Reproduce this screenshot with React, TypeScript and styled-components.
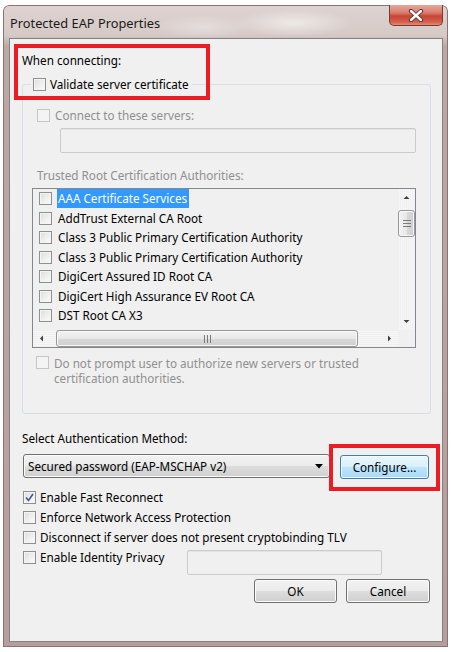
import React from 'react';
import styled, { createGlobalStyle } from 'styled-components';

const FONT = `"Noto Sans", "Liberation Sans", sans-serif`;

const Global = createGlobalStyle`
  html, body { margin: 0; padding: 0; background: #ffffff; }
  body { font-family: ${FONT}; font-size: 11.7px; color: #000; }
  * { box-sizing: border-box; }
`;

const Window = styled.div`
  margin: 5px 0 0 3px;
  width: 445px;
  height: 642px;
  display: flex;
  flex-direction: column;
  padding: 0 5px 5px 6px;
  border-radius: 6px 6px 0 0;
  background:
    radial-gradient(ellipse 60px 14px at 290px 18px, rgba(255,255,255,0.55), rgba(255,255,255,0) 100%),
    radial-gradient(ellipse 50px 12px at 200px 22px, rgba(255,255,255,0.35), rgba(255,255,255,0) 100%),
    linear-gradient(to bottom, #ddd3d0 0px, #d6cac7 30px, #bca7a2 42px, #b69f9a 100%);
  box-shadow: inset 0 0 0 1px #8a7370;
`;

const TitleBar = styled.div`
  height: 33px;
  display: flex;
  justify-content: space-between;
  align-items: flex-start;
`;

const Title = styled.div`
  padding: 9px 0 0 1px;
  font-size: 12.8px;
  color: #1a1a1a;
`;

const CloseBtn = styled.div`
  width: 54px;
  height: 21px;
  border: 1px solid #7a3a34;
  border-top: none;
  border-radius: 0 0 5px 5px;
  background: linear-gradient(to bottom, #e8a89c 0%, #d97a6a 40%, #c84534 55%, #d4604c 85%, #e08a74 100%);
  display: flex;
  align-items: center;
  justify-content: center;
`;

const Client = styled.div`
  flex: 1;
  position: relative;
  background: #f0f0f0;
  border: 1px solid #838383;
  display: flex;
  flex-direction: column;
`;

const Text = styled.div<{ $disabled?: boolean }>`
  line-height: 15px;
  color: ${p => (p.$disabled ? '#8f8f8f' : '#000')};
  white-space: nowrap;
`;

const Heading = styled(Text)`
  margin: 14px 0 0 12px;
`;

const Group = styled.fieldset`
  margin: 9px 0 0 12px;
  width: 409px;
  padding: 0 14px 27px 9px;
  border: 1px solid #d5dfe5;
  border-radius: 3px;
  min-inline-size: auto;
`;

const Legend = styled.legend`
  padding: 0 3px 0 2px;
  margin-left: -1px;
  height: 15px;
  display: flex;
  align-items: center;
  gap: 4px;
  line-height: 15px;
  white-space: nowrap;
`;

const Box = styled.span<{ $disabled?: boolean }>`
  flex: none;
  width: 13px;
  height: 13px;
  border: 1px solid ${p => (p.$disabled ? '#c6c6c6' : '#8e8f8f')};
  background: ${p =>
    p.$disabled
      ? '#f4f4f4'
      : 'linear-gradient(135deg, #dcdcdc 0%, #eeeeee 50%, #fbfbfb 100%)'};
  box-shadow: inset 0 0 0 1px #f4f4f4;
  display: flex;
  align-items: center;
  justify-content: center;
`;

const Check = ({ checked, disabled }: { checked?: boolean; disabled?: boolean }) => (
  <Box $disabled={disabled}>
    {checked && (
      <svg width="9" height="9" viewBox="0 0 9 9">
        <path d="M1 4.5 L3.5 7.5 L8 1" fill="none" stroke="#3b5a9a" strokeWidth="1.6" />
      </svg>
    )}
  </Box>
);

const CheckRow = styled.div<{ $indent?: number; $top?: number; $align?: string }>`
  display: flex;
  align-items: ${p => p.$align ?? 'center'};
  gap: 5px;
  min-height: 15px;
  margin-left: ${p => p.$indent ?? 0}px;
  margin-top: ${p => p.$top ?? 0}px;
`;

const Input = styled.div<{ $w: number; $left?: number; $top?: number }>`
  width: ${p => p.$w}px;
  height: 25px;
  margin-left: ${p => p.$left ?? 0}px;
  margin-top: ${p => p.$top ?? 0}px;
  border: 1px solid #c9cbcf;
  border-radius: 2px;
  background: #f0f0f0;
  box-shadow: inset 0 1px 0 #e4e4e4;
`;

const SubLabel = styled(Text)`
  margin: 15px 0 0 5px;
`;

const ListBox = styled.div`
  margin-top: 5px;
  width: 384px;
  height: 160px;
  border: 1px solid #828790;
  background: #f0f0f0;
  display: grid;
  grid-template-columns: 1fr 17px;
  grid-template-rows: 1fr 17px;
`;

const Rows = styled.div`
  overflow: hidden;
`;

const ListRow = styled.div`
  height: 19.5px;
  display: flex;
  align-items: center;
  padding-left: 6px;
  gap: 5px;
`;

const ItemText = styled.span<{ $sel?: boolean }>`
  line-height: 19px;
  padding: 0 2px 0 1px;
  white-space: nowrap;
  background: ${p => (p.$sel ? '#3399ff' : 'transparent')};
  color: ${p => (p.$sel ? '#ffffff' : '#000')};
`;

const VScroll = styled.div`
  display: flex;
  flex-direction: column;
  background: repeating-linear-gradient(90deg, #f0f0f0 0 1px, #f6f6f6 1px 2px);
`;

const HScroll = styled.div`
  display: flex;
  align-items: stretch;
  background: repeating-linear-gradient(0deg, #f0f0f0 0 1px, #f6f6f6 1px 2px);
`;

const Corner = styled.div`
  background: #f0f0f0;
`;

const Arrow = styled.div`
  flex: none;
  width: 17px;
  height: 17px;
  display: flex;
  align-items: center;
  justify-content: center;
`;

const Track = styled.div<{ $dir: 'v' | 'h' }>`
  flex: 1;
  display: flex;
  flex-direction: ${p => (p.$dir === 'v' ? 'column' : 'row')};
`;

const Thumb = styled.div<{ $dir: 'v' | 'h' }>`
  border: 1px solid #979797;
  border-radius: 3px;
  background: ${p =>
    p.$dir === 'v'
      ? 'linear-gradient(90deg, #f3f3f3 0%, #e8e8e8 50%, #d9d9d9 51%, #cfcfcf 100%)'
      : 'linear-gradient(180deg, #f3f3f3 0%, #e8e8e8 50%, #d9d9d9 51%, #cfcfcf 100%)'};
  box-shadow: inset 0 0 0 1px #f8f8f8;
  display: flex;
  align-items: center;
  justify-content: center;
  ${p => (p.$dir === 'v' ? 'width: 17px;' : 'height: 17px;')}
`;

const SectionLabel = styled(Text)`
  margin: 17px 0 0 12px;
`;

const MethodRow = styled.div`
  display: flex;
  gap: 10px;
  margin: 8px 0 0 13px;
  align-items: flex-start;
`;

const Combo = styled.div`
  width: 307px;
  height: 24px;
  border: 1px solid #707070;
  border-radius: 3px;
  background: linear-gradient(to bottom, #f2f2f2 0%, #ebebeb 50%, #dddddd 51%, #cfcfcf 100%);
  box-shadow: inset 0 0 0 1px #fbfbfb;
  display: flex;
  align-items: center;
  justify-content: space-between;
  padding: 0 6px 0 4px;
  line-height: 15px;
`;

const Button = styled.div<{ $w: number; $focus?: boolean }>`
  width: ${p => p.$w}px;
  height: 24px;
  border: 1px solid ${p => (p.$focus ? '#3c7fb1' : '#707070')};
  border-radius: 3px;
  background: ${p =>
    p.$focus
      ? 'linear-gradient(to bottom, #eaf6fd 0%, #d9f0fc 50%, #bee6fd 51%, #a7d9f5 100%)'
      : 'linear-gradient(to bottom, #f2f2f2 0%, #ebebeb 50%, #dddddd 51%, #cfcfcf 100%)'};
  box-shadow: inset 0 0 0 1px ${p => (p.$focus ? '#f4fbfe' : '#fbfbfb')};
  display: flex;
  align-items: center;
  justify-content: center;
  line-height: 15px;
  margin-top: ${p => (p.$focus ? 1 : 0)}px;
`;

const Options = styled.div`
  margin: 8px 0 0 13px;
  display: flex;
  flex-direction: column;
`;

const OptionRow = styled.div`
  display: flex;
  align-items: flex-start;
  height: 20.3px;
`;

const OptionLabel = styled.div<{ $w?: number }>`
  display: flex;
  align-items: center;
  gap: 4px;
  height: 20px;
  ${p => (p.$w ? `width: ${p.$w}px;` : '')}
`;

const Footer = styled.div`
  display: flex;
  justify-content: flex-end;
  gap: 9px;
  margin: 11px 12px 0 0;
`;

const Annotation = styled.div<{ $x: number; $y: number; $w: number; $h: number }>`
  position: absolute;
  left: ${p => p.$x}px;
  top: ${p => p.$y}px;
  width: ${p => p.$w}px;
  height: ${p => p.$h}px;
  border: 4px solid #ec1c24;
  pointer-events: none;
`;

const Tri = ({ dir }: { dir: 'up' | 'down' | 'left' | 'right' }) => {
  const d = {
    up: 'M0.5 4 L3.5 1 L6.5 4 Z',
    down: 'M0.5 1 L3.5 4 L6.5 1 Z',
    left: 'M4 0.5 L1 3.5 L4 6.5 Z',
    right: 'M1 0.5 L4 3.5 L1 6.5 Z',
  }[dir];
  const vert = dir === 'up' || dir === 'down';
  return (
    <svg width={vert ? 7 : 5} height={vert ? 5 : 7} viewBox={vert ? '0 0 7 5' : '0 0 5 7'}>
      <path d={d} fill="#404040" />
    </svg>
  );
};

const Grip = ({ vertical }: { vertical: boolean }) =>
  vertical ? (
    <svg width="8" height="7" viewBox="0 0 8 7">
      <path d="M0 0.5 H8 M0 3.5 H8 M0 6.5 H8" stroke="#7a7a7a" strokeWidth="1" />
    </svg>
  ) : (
    <svg width="7" height="8" viewBox="0 0 7 8">
      <path d="M0.5 0 V8 M3.5 0 V8 M6.5 0 V8" stroke="#7a7a7a" strokeWidth="1" />
    </svg>
  );

const certs = [
  'AAA Certificate Services',
  'AddTrust External CA Root',
  'Class 3 Public Primary Certification Authority',
  'Class 3 Public Primary Certification Authority',
  'DigiCert Assured ID Root CA',
  'DigiCert High Assurance EV Root CA',
  'DST Root CA X3',
];

const options = [
  { label: 'Enable Fast Reconnect', checked: true },
  { label: 'Enforce Network Access Protection' },
  { label: 'Disconnect if server does not present cryptobinding TLV' },
];

export default function App() {
  return (
    <>
      <Global />
      <Window>
        <TitleBar>
          <Title>Protected EAP Properties</Title>
          <CloseBtn>
            <svg width="16" height="13" viewBox="0 0 16 13">
              <path d="M3 2 L13 11 M13 2 L3 11" stroke="#5a2a26" strokeWidth="4.2" strokeLinecap="round" />
              <path d="M3 2 L13 11 M13 2 L3 11" stroke="#ffffff" strokeWidth="2.4" strokeLinecap="round" />
            </svg>
          </CloseBtn>
        </TitleBar>
        <Client>
          <Heading>When connecting:</Heading>
          <Group>
            <Legend>
              <Check />
              <span>Validate server certificate</span>
            </Legend>
            <CheckRow $indent={5} $top={16}>
              <Check disabled />
              <Text $disabled>Connect to these servers:</Text>
            </CheckRow>
            <Input $w={356} $left={28} $top={5} />
            <SubLabel $disabled>Trusted Root Certification Authorities:</SubLabel>
            <ListBox>
              <Rows>
                {certs.map((c, i) => (
                  <ListRow key={i}>
                    <Check />
                    <ItemText $sel={i === 0}>{c}</ItemText>
                  </ListRow>
                ))}
              </Rows>
              <VScroll>
                <Arrow><Tri dir="up" /></Arrow>
                <Track $dir="v">
                  <Thumb $dir="v" style={{ height: 27, marginTop: 4 }}>
                    <Grip vertical />
                  </Thumb>
                </Track>
                <Arrow><Tri dir="down" /></Arrow>
              </VScroll>
              <HScroll>
                <Arrow><Tri dir="left" /></Arrow>
                <Track $dir="h">
                  <Thumb $dir="h" style={{ width: 302, marginLeft: 6 }}>
                    <Grip vertical={false} />
                  </Thumb>
                </Track>
                <Arrow><Tri dir="right" /></Arrow>
              </HScroll>
              <Corner />
            </ListBox>
            <CheckRow $indent={4} $top={8} $align="flex-start">
              <Check disabled />
              <Text $disabled>
                Do not prompt user to authorize new servers or trusted
                <br />
                certification authorities.
              </Text>
            </CheckRow>
          </Group>
          <SectionLabel>Select Authentication Method:</SectionLabel>
          <MethodRow>
            <Combo>
              <span>Secured password (EAP-MSCHAP v2)</span>
              <svg width="8" height="5" viewBox="0 0 8 5"><path d="M0 0 H8 L4 4.5 Z" fill="#000" /></svg>
            </Combo>
            <Button $w={89} $focus>Configure...</Button>
          </MethodRow>
          <Options>
            {options.map((o, i) => (
              <OptionRow key={i}>
                <OptionLabel>
                  <Check checked={o.checked} />
                  <Text>{o.label}</Text>
                </OptionLabel>
              </OptionRow>
            ))}
            <OptionRow>
              <OptionLabel $w={164}>
                <Check />
                <Text>Enable Identity Privacy</Text>
              </OptionLabel>
              <Input $w={195} $top={2} />
            </OptionRow>
          </Options>
          <Footer>
            <Button $w={83}>OK</Button>
            <Button $w={84}>Cancel</Button>
          </Footer>
          <Annotation $x={4} $y={5} $w={196} $h={56} />
          <Annotation $x={319} $y={405} $w={111} $h={47} />
        </Client>
      </Window>
    </>
  );
}
